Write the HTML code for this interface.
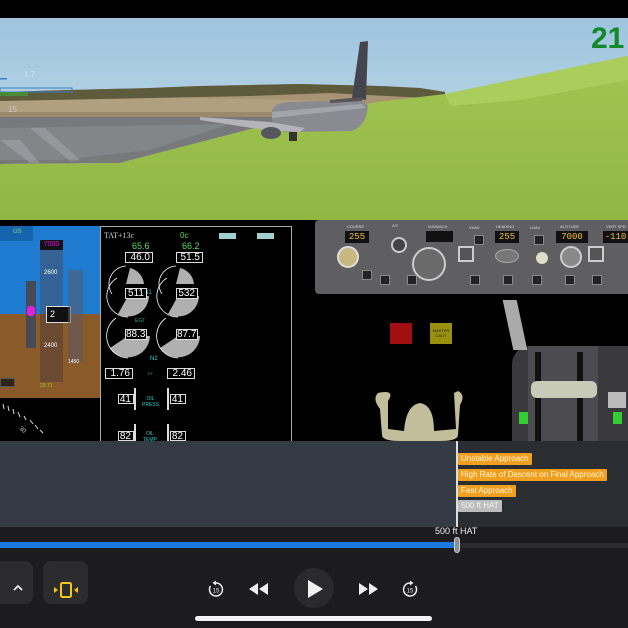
<!DOCTYPE html>
<html><head><meta charset="utf-8"><style>
*{margin:0;padding:0;box-sizing:border-box}
body{width:628px;height:628px;overflow:hidden;background:#000;font-family:"Liberation Sans",sans-serif;position:relative}
.a{position:absolute}
.box{position:absolute;border:1px solid #ddd;color:#fff;font-size:10px;text-align:right;padding-right:2px;line-height:10px;background:#000}
.lbl{position:absolute;left:458px;height:12px;font-size:8px;line-height:12px;color:#fff3d0;padding:0 3px;background:#f0a020;border-radius:1px}
.mb{position:absolute;width:10px;height:10px;background:#222;border:1px solid #888}
.mt{position:absolute;font-size:4px;color:#ddd}
.dsp{position:absolute;background:#111;color:#f0c040;font-size:9px;font-family:"Liberation Mono",monospace;text-align:center;line-height:12px;height:12px}
</style></head><body>
<svg class="a" style="left:0;top:18px" width="628" height="202" viewBox="0 18 628 202">
<defs><linearGradient id="sky" x1="0" y1="0" x2="0" y2="1"><stop offset="0" stop-color="#9dc4df"/><stop offset="1" stop-color="#cfe2ea"/></linearGradient>
<linearGradient id="gr" x1="0" y1="0" x2="0" y2="1"><stop offset="0" stop-color="#a2c552"/><stop offset="1" stop-color="#92b644"/></linearGradient></defs>
<rect x="0" y="18" width="628" height="202" fill="url(#sky)"/>
<path d="M0,92 L70,90 150,88 200,86 250,85 300,84 340,85 380,86 420,88 445,92 445,118 0,118Z" fill="#a89474"/>
<path d="M0,100 L120,96 200,98 300,100 360,104 360,118 0,118Z" fill="#b5a586" opacity=".7"/>
<path d="M0,92 L70,90 150,88 200,86 250,85 300,84 340,85 380,86 420,88 445,92 445,99 330,93 250,96 150,98 0,101Z" fill="#5e5a3c"/>
<path d="M0,112 L440,112 440,118 0,118Z" fill="#8a7a60" opacity=".6"/>
<path d="M0,117 L300,117 255,128 120,163 0,164Z" fill="#77797b"/>
<path d="M0,128 L230,124 150,150 60,160 0,160Z" fill="#8b8f92" opacity=".6"/>
<path d="M0,140 L20,140 40,163 30,163Z M30,128 L45,128 80,160 70,161Z" fill="#a0a4a6" opacity=".6"/>
<path d="M628,56 L628,220 0,220 0,164 120,163 255,128 300,117 370,103 445,94Z" fill="url(#gr)"/>
<path d="M445,94 L628,56 628,80 520,100 450,106Z" fill="#abcd5c"/>
<path d="M352,98 L360,42 368,41 366,100Z" fill="#44444c"/>
<path d="M272,110 Q275,103 290,102 L362,100 L368,106 Q366,126 352,131 L285,132 Q272,128 272,118Z" fill="#8a8a92"/>
<path d="M272,112 L362,104 366,108 272,118Z" fill="#a4a4ac"/>
<path d="M200,117 L270,122 305,128 300,132 265,130 200,120Z" fill="#b4b4ba"/>
<path d="M330,100 L362,97 362,101 330,103Z" fill="#555"/>
<ellipse cx="271" cy="133" rx="10" ry="6" fill="#56565e"/>
<rect x="289" y="132" width="8" height="9" fill="#333"/>
<rect x="0" y="88" width="72" height="4" fill="none" stroke="#3a7fc0"/>
<rect x="0" y="92" width="28" height="4" fill="#4a8a3a"/>
<rect x="0" y="78" width="7" height="1.5" fill="#3a7fc0"/>
<text x="24" y="77" font-size="8" fill="#dde">1.7</text>
<text x="8" y="112" font-size="8" fill="#ccc">15</text>
<text x="591" y="48" font-size="30" font-weight="bold" fill="#128a2a" font-family="Liberation Sans">21</text>
</svg>
<!-- PFD -->
<div class="a" style="left:0;top:226px;width:100px;height:88px;background:#1e7bd0"></div>
<div class="a" style="left:0;top:314px;width:100px;height:84px;background:#8a5a28"></div>
<div class="a" style="left:0;top:226px;width:33px;height:15px;background:#1565ae;color:#8c8;font-size:6px;padding:3px 0 0 13px">GS</div>
<div class="a" style="left:40px;top:241px;width:23px;height:141px;background:#3d5a80;opacity:.75"></div>
<div class="a" style="left:40px;top:314px;width:23px;height:68px;background:#6a4a30"></div>
<div class="a" style="left:40px;top:240px;width:23px;height:10px;background:#111;color:#e0e;font-size:7px;text-align:center;line-height:10px">7000</div>
<div class="a" style="left:44px;top:270px;color:#fff;font-size:6px">2600</div>
<div class="a" style="left:44px;top:343px;color:#fff;font-size:6px">2400</div>
<div class="a" style="left:26px;top:281px;width:10px;height:67px;background:#454a55"></div>
<div class="a" style="left:27px;top:306px;width:8px;height:10px;background:#e020e0;border-radius:3px"></div>
<div class="a" style="left:46px;top:306px;width:25px;height:17px;border:1px solid #ddd;background:#111;color:#fff;font-size:9px;line-height:15px;padding-left:3px">2</div>
<div class="a" style="left:68px;top:270px;width:15px;height:92px;background:#5a5a66;opacity:.55"></div>
<div class="a" style="left:68px;top:359px;color:#fff;font-size:5px">1450</div>
<div class="a" style="left:40px;top:383px;color:#9c4;font-size:5px">29.71</div>
<div class="a" style="left:0;top:378px;width:15px;height:9px;background:#2e2416;border:1px solid #555"></div>
<svg class="a" style="left:0;top:398px" width="50" height="44"><g stroke="#ddd" stroke-width="1"><path d="M3,6 L4,11 M8,8 L9,13 M13,11 L14,16 M18,14 L20,19 M24,18 L26,22 M30,22 L33,26 M35,27 L38,31 M40,32 L43,35"/></g><text x="19" y="31" font-size="6" fill="#ddd" transform="rotate(40 19 31)">30</text></svg>
<!-- EICAS -->
<div class="a" style="left:100px;top:226px;width:192px;height:216px;border:1px solid #aaa;border-bottom:none;background:#000"></div>
<div class="a" style="left:104px;top:231px;color:#ccc;font-size:8px;font-family:'Liberation Serif',serif">TAT+13c</div>
<div class="a" style="left:180px;top:231px;color:#5d5;font-size:8px">0c</div>
<div class="a" style="left:219px;top:233px;width:17px;height:6px;background:#9fcfd0"></div>
<div class="a" style="left:257px;top:233px;width:17px;height:6px;background:#9fcfd0"></div>
<div class="a" style="left:132px;top:241px;color:#5d5;font-size:9px">65.6</div>
<div class="a" style="left:182px;top:241px;color:#5d5;font-size:9px">66.2</div>
<svg class="a" style="left:100px;top:226px" width="120" height="150">
<g fill="#b0b0b0">
<path d="M26,58 L30,42 A18,18 0 0,1 44,58Z"/><path d="M76,58 L80,42 A18,18 0 0,1 94,58Z"/>
<path d="M28,70 L49,70 A21,21 0 0,1 18,88Z"/><path d="M78,70 L99,70 A21,21 0 0,1 68,88Z"/>
<path d="M28,110 L50,110 A22,22 0 0,1 10,122Z"/><path d="M78,110 L100,110 A22,22 0 0,1 60,122Z"/>
</g>
<g fill="none" stroke="#fff" stroke-width="0.8">
<path d="M12,68 A18,18 0 0,1 26,40"/><path d="M62,68 A18,18 0 0,1 76,40"/>
<path d="M17,52 A21,21 0 0,0 28,91"/><path d="M67,52 A21,21 0 0,0 78,91"/>
<path d="M16,92 A22,22 0 0,0 28,132"/><path d="M66,92 A22,22 0 0,0 78,132"/>
</g>
<text x="44" y="68" font-size="6" fill="#3cc">N1</text>
<text x="35" y="96" font-size="5" fill="#3a8">EGT</text>
</svg>
<div class="box" style="left:125px;top:252px;width:28px;height:11px">46.0</div>
<div class="box" style="left:176px;top:252px;width:27px;height:11px">51.5</div>
<div class="box" style="left:125px;top:288px;width:22px;height:11px">511</div>
<div class="box" style="left:176px;top:288px;width:22px;height:11px">532</div>
<div class="box" style="left:125px;top:329px;width:22px;height:11px">88.3</div>
<div class="box" style="left:176px;top:329px;width:22px;height:11px">87.7</div>
<div class="a" style="left:150px;top:356px;color:#3cc;font-size:6px">N2</div>
<div class="box" style="left:105px;top:368px;width:28px;height:11px">1.76</div>
<div class="a" style="left:148px;top:371px;color:#3a8;font-size:4px">FF</div>
<div class="box" style="left:167px;top:368px;width:28px;height:11px">2.46</div>
<div class="box" style="left:118px;top:394px;width:16px;height:10px">41</div>
<div class="box" style="left:170px;top:394px;width:16px;height:10px">41</div>
<div class="box" style="left:118px;top:431px;width:16px;height:10px">82</div>
<div class="box" style="left:170px;top:431px;width:16px;height:10px">82</div>
<div class="a" style="left:134px;top:388px;width:2px;height:22px;background:#ddd"></div>
<div class="a" style="left:167px;top:388px;width:2px;height:22px;background:#ddd"></div>
<div class="a" style="left:134px;top:424px;width:2px;height:17px;background:#ddd"></div>
<div class="a" style="left:167px;top:424px;width:2px;height:17px;background:#ddd"></div>
<div class="a" style="left:142px;top:396px;color:#3cc;font-size:5px;text-align:center">OIL<br>PRESS</div>
<div class="a" style="left:143px;top:431px;color:#3cc;font-size:5px;text-align:center">OIL<br>TEMP</div>
<!-- MCP -->
<div class="a" style="left:315px;top:220px;width:313px;height:74px;background:#5f5f62;border-radius:4px 0 0 4px"></div>
<div class="dsp" style="left:345px;top:231px;width:24px">255</div>
<div class="a" style="left:426px;top:231px;width:27px;height:11px;background:#111"></div>
<div class="dsp" style="left:495px;top:231px;width:24px">255</div>
<div class="dsp" style="left:556px;top:231px;width:32px">7000</div>
<div class="dsp" style="left:603px;top:231px;width:25px">-110</div>
<div class="mt" style="left:347px;top:224px">COURSE</div><div class="mt" style="left:392px;top:223px">A/T</div>
<div class="mt" style="left:428px;top:224px">IAS/MACH</div><div class="mt" style="left:469px;top:225px">VNAV</div>
<div class="mt" style="left:496px;top:224px">HEADING</div><div class="mt" style="left:530px;top:225px">LNAV</div>
<div class="mt" style="left:560px;top:224px">ALTITUDE</div><div class="mt" style="left:606px;top:224px">VERT SPD</div>
<div class="a" style="left:337px;top:246px;width:22px;height:22px;border-radius:50%;background:#c8b880;border:2px solid #ddd"></div>
<div class="a" style="left:391px;top:237px;width:16px;height:16px;border-radius:50%;border:2px solid #ccc;background:#444"></div>
<div class="a" style="left:412px;top:247px;width:34px;height:34px;border-radius:50%;border:2px solid #ccc;background:#6a6a6a"></div>
<div class="a" style="left:458px;top:246px;width:16px;height:16px;border:2px solid #ccc;background:#555"></div>
<div class="a" style="left:495px;top:249px;width:24px;height:14px;border-radius:50%;background:#777;border:1px solid #aaa"></div>
<div class="a" style="left:536px;top:252px;width:12px;height:12px;border-radius:50%;background:#dfe0c8"></div>
<div class="a" style="left:560px;top:246px;width:22px;height:22px;border-radius:50%;background:#888;border:2px solid #ccc"></div>
<div class="a" style="left:588px;top:246px;width:16px;height:16px;border:2px solid #ccc;background:#555"></div>
<div class="mb" style="left:474px;top:235px"></div><div class="mb" style="left:534px;top:235px"></div>
<div class="mb" style="left:380px;top:275px"></div><div class="mb" style="left:407px;top:275px"></div>
<div class="mb" style="left:470px;top:275px"></div><div class="mb" style="left:503px;top:275px"></div>
<div class="mb" style="left:532px;top:275px"></div><div class="mb" style="left:565px;top:275px"></div>
<div class="mb" style="left:592px;top:275px"></div><div class="mb" style="left:362px;top:270px"></div>
<!-- lights -->
<div class="a" style="left:390px;top:323px;width:22px;height:21px;background:#a01010"></div>
<div class="a" style="left:430px;top:323px;width:22px;height:21px;background:#9a9010;color:#222;font-size:4px;text-align:center;padding-top:5px">MASTER<br>CAUT</div>
<!-- yoke -->
<svg class="a" style="left:370px;top:385px" width="100" height="58">
<path d="M8,8 Q2,14 10,24 L12,50 Q12,56 30,56 L70,56 Q88,56 88,50 L90,20 Q96,10 88,6 L84,8 L86,44 L64,46 Q64,20 50,18 Q36,20 34,46 L18,44 L18,16 Q26,4 8,8Z" fill="#c2bd9a"/>
</svg>
<!-- throttle -->
<div class="a" style="left:512px;top:346px;width:116px;height:95px;background:#3a3a3c;border-radius:18px 0 0 0"></div>
<div class="a" style="left:528px;top:346px;width:70px;height:95px;background:#4c4c50"></div>
<div class="a" style="left:535px;top:352px;width:6px;height:89px;background:#111"></div>
<div class="a" style="left:577px;top:352px;width:6px;height:89px;background:#111"></div>
<div class="a" style="left:531px;top:381px;width:66px;height:17px;background:#c8cbb8;border-radius:6px"></div>
<div class="a" style="left:508px;top:300px;width:14px;height:50px;background:#aaa;transform:skewX(12deg)"></div>
<div class="a" style="left:519px;top:412px;width:9px;height:12px;background:#3c3"></div>
<div class="a" style="left:613px;top:412px;width:9px;height:12px;background:#3c3"></div>
<div class="a" style="left:608px;top:392px;width:18px;height:16px;background:#bbb"></div>
<!-- timeline -->
<div class="a" style="left:0;top:441px;width:457px;height:86px;background:#343b45"></div>
<div class="a" style="left:457px;top:441px;width:171px;height:86px;background:#2a2d31"></div>
<div class="a" style="left:456px;top:441px;width:1.5px;height:100px;background:#ddd"></div>
<div class="lbl" style="top:453px">Unstable Approach</div>
<div class="lbl" style="top:469px">High Rate of Descent on Final Approach</div>
<div class="lbl" style="top:485px">Fast Approach</div>
<div class="lbl" style="top:500px;background:#bdbdbd;color:#f4f4f4">500 ft HAT</div>
<div class="a" style="left:0;top:527px;width:628px;height:101px;background:#1c1c1e"></div>
<div class="a" style="left:435px;top:526px;color:#eee;font-size:9px">500 ft HAT</div>
<div class="a" style="left:457px;top:543px;width:171px;height:5px;background:#2c2c2e"></div>
<div class="a" style="left:0;top:542px;width:457px;height:6px;background:#1a78e0"></div>
<div class="a" style="left:454px;top:537px;width:6px;height:16px;background:#8a8f96;border-radius:3px;border:1px solid #ccc"></div>
<div class="a" style="left:-8px;top:561px;width:41px;height:43px;background:#2c2c2e;border-radius:8px"></div>
<svg class="a" style="left:12px;top:583px" width="12" height="10"><path d="M2,7 L6,3 10,7" fill="none" stroke="#eee" stroke-width="1.8"/></svg>
<div class="a" style="left:43px;top:561px;width:45px;height:43px;background:#2c2c2e;border-radius:8px"></div>
<svg class="a" style="left:52px;top:580px" width="28" height="20"><rect x="9" y="3" width="10" height="14" rx="1.5" fill="none" stroke="#f5c518" stroke-width="2"/><path d="M2,7 L6,10 2,13Z M26,7 L22,10 26,13Z" fill="#f5c518"/></svg>
<svg class="a" style="left:207px;top:580px" width="18" height="18"><path d="M9,3 A6.5,6.5 0 1 1 3.5,6" fill="none" stroke="#eee" stroke-width="1.5"/><path d="M9,0.5 L9,5.5 5.5,3Z" fill="#eee"/><text x="9" y="12.5" font-size="6" fill="#eee" text-anchor="middle" font-family="Liberation Sans">15</text></svg>
<svg class="a" style="left:248px;top:582px" width="22" height="14"><path d="M10,1 L10,13 1,7Z M20,1 L20,13 11,7Z" fill="#eee"/></svg>
<div class="a" style="left:294px;top:568px;width:40px;height:40px;background:#2a2a2c;border-radius:50%"></div>
<svg class="a" style="left:306px;top:579px" width="18" height="20"><path d="M2,1 L17,10 2,19Z" fill="#f2f2f2"/></svg>
<svg class="a" style="left:357px;top:582px" width="22" height="14"><path d="M2,1 L11,7 2,13Z M12,1 L21,7 12,13Z" fill="#eee"/></svg>
<svg class="a" style="left:401px;top:580px" width="18" height="18"><path d="M9,3 A6.5,6.5 0 1 0 14.5,6" fill="none" stroke="#eee" stroke-width="1.5"/><path d="M9,0.5 L9,5.5 12.5,3Z" fill="#eee"/><text x="9" y="12.5" font-size="6" fill="#eee" text-anchor="middle" font-family="Liberation Sans">15</text></svg>
<div class="a" style="left:195px;top:616px;width:237px;height:5px;background:#f4f4f4;border-radius:3px"></div>
</body></html>
